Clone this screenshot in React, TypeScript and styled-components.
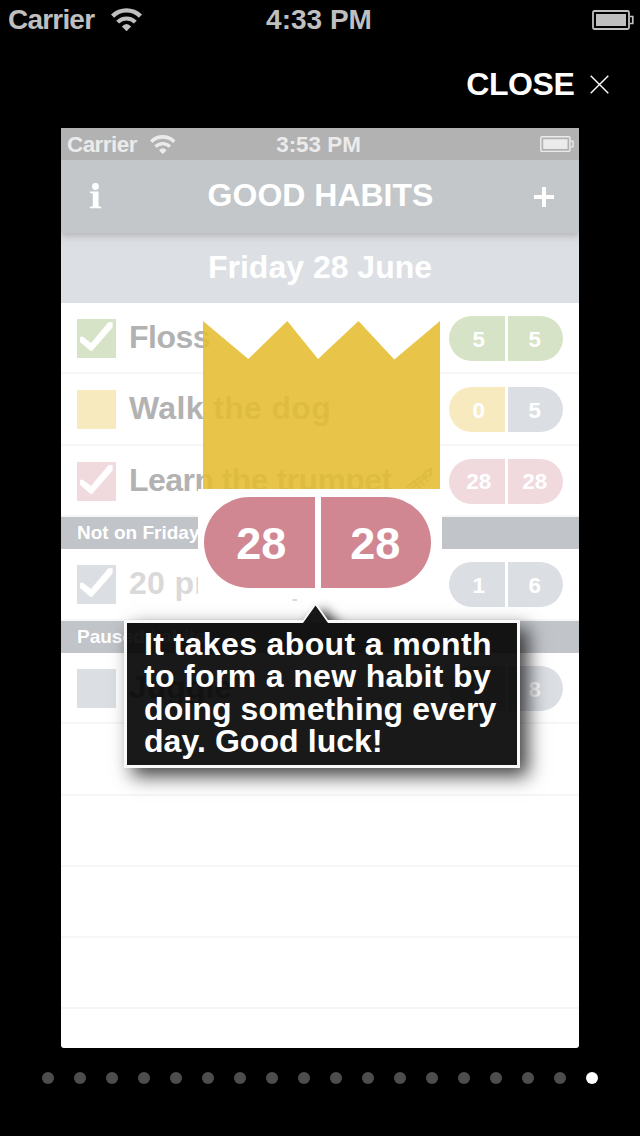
import React from "react";
import styled, { createGlobalStyle } from "styled-components";

const GlobalStyle = createGlobalStyle`
  * { box-sizing: border-box; }
  body { margin: 0; background: #000; }
`;

const palette = {
  green: "#d7e3c6",
  yellow: "#f8eabf",
  pink: "#f0dade",
  grey: "#dbdfe4",
};
type Tone = keyof typeof palette;

const Screen = styled.div`
  width: 640px;
  height: 1136px;
  background: #000;
  color: #fff;
  font-family: "Liberation Sans", Arial, sans-serif;
  font-weight: 700;
  display: flex;
  flex-direction: column;
  align-items: center;
  overflow: hidden;
`;

const StatusBar = styled.div`
  width: 640px;
  height: 40px;
  padding: 0 6px 2px 8px;
  display: grid;
  grid-template-columns: 1fr auto 1fr;
  align-items: center;
  font-size: 28px;
  line-height: 38px;
  color: #bfbfbf;
`;

const Carrier = styled.div<{ $gap: number; $spacing: number }>`
  display: flex;
  align-items: center;
  gap: ${(p) => p.$gap}px;
  letter-spacing: ${(p) => p.$spacing}px;
`;

const StatusText = styled.span<{ $drop?: number }>`
  padding-top: ${(p) => p.$drop ?? 0}px;
`;

const Clock = styled(StatusText)`
  padding-right: 4px;
`;

const Battery = styled.svg`
  justify-self: end;
  display: block;
`;

const CloseRow = styled.div`
  width: 640px;
  height: 88px;
  padding: 0 31px 0 0;
  display: flex;
  justify-content: flex-end;
  align-items: center;
  gap: 15.5px;
  font-size: 32px;
  letter-spacing: -0.4px;
`;

const Slide = styled.div`
  position: relative;
  width: 518px;
  height: 920px;
  flex: none;
  background: #fff;
  border-radius: 0 0 3px 3px;
  overflow: hidden;
`;

const MiniStatus = styled.div`
  height: 32px;
  padding: 0 5px 0 6px;
  display: grid;
  grid-template-columns: 1fr auto 1fr;
  align-items: center;
  background: #b2b2b2;
  color: #ebebeb;
  font-size: 22.4px;
  line-height: 32px;
`;

const NavBar = styled.div`
  position: relative;
  height: 73px;
  padding: 0 24px 2px 28px;
  display: grid;
  grid-template-columns: 24px 1fr 22px;
  align-items: center;
  background: #c3c7ca;
  box-shadow: 0 3px 7px rgba(140, 140, 140, 0.5);
  clip-path: inset(0 0 -14px 0);
  font-size: 32px;
  text-align: center;
`;

const NavTitle = styled.span`
  padding-right: 5px;
`;

const Plus = styled.svg`
  position: relative;
  top: 1px;
`;

const DateBar = styled.div`
  height: 70px;
  display: flex;
  align-items: center;
  justify-content: center;
  padding-bottom: 2px;
  background: #dcdfe4;
  font-size: 32px;
`;

const Row = styled.div`
  height: 71.3px;
  padding: 2px 16px 0;
  display: flex;
  align-items: center;
  border-bottom: 2px solid #f6f6f6;
`;

const Check = styled.div<{ $tone: Tone }>`
  width: 39px;
  height: 39px;
  flex: none;
  background: ${(p) => palette[p.$tone]};
`;

const HabitName = styled.div<{ $dim?: boolean; $spacing: number }>`
  flex: 1;
  display: flex;
  align-items: center;
  gap: 12px;
  padding: 0 0 3px 13px;
  font-size: 32px;
  line-height: 36px;
  letter-spacing: ${(p) => p.$spacing}px;
  white-space: nowrap;
  color: ${(p) => (p.$dim ? "#d9d9d9" : "#b2b2b2")};
`;

const Pill = styled.div<{ $large?: boolean }>`
  display: grid;
  grid-template-columns: 1fr 1fr;
  gap: ${(p) => (p.$large ? 6 : 3)}px;
  width: ${(p) => (p.$large ? 227 : 114)}px;
  height: ${(p) => (p.$large ? 91 : 45)}px;
  border-radius: 46px;
  overflow: hidden;
  font-size: ${(p) => (p.$large ? 45 : 22.4)}px;
`;

const Count = styled.div<{ $color: string }>`
  display: flex;
  align-items: center;
  justify-content: center;
  padding: 2px 0 0 4px;
  background: ${(p) => p.$color};

  & + & {
    padding: 2px 1px 0 0;
  }
`;

const Section = styled.div`
  height: 32.4px;
  padding: 0 16px;
  line-height: 32px;
  font-size: 19px;
  background: #c1c4c9;
`;

const Crown = styled.svg`
  position: absolute;
  left: 142px;
  top: 193px;
  opacity: 0.88;
`;

const BadgePatch = styled.div`
  position: absolute;
  left: 137px;
  top: 361px;
  width: 244px;
  height: 110px;
  padding: 8px 0 0 6px;
  background: #fff;
`;

const Tooltip = styled.div`
  position: absolute;
  left: 63px;
  top: 492px;
  width: 396px;
  height: 148px;
  padding: 5px 17px;
  border: 3px solid #fafafa;
  background: rgba(0, 0, 0, 0.9);
  background-clip: padding-box;
  box-shadow: 8px 8px 18px rgba(0, 0, 0, 0.75);
  font-size: 32px;
  line-height: 32.35px;
  white-space: nowrap;
`;

const TipLine = styled.div<{ $spacing: number }>`
  letter-spacing: ${(p) => p.$spacing}px;
`;

const PointerShadow = styled.svg`
  position: absolute;
  left: 220px;
  top: 450px;
`;

const Pointer = styled.svg`
  position: absolute;
  left: 174px;
  top: -21px;
`;

const Dots = styled.div`
  display: flex;
  gap: 20px;
  padding-top: 24px;
`;

const Dot = styled.span<{ $active: boolean }>`
  width: 12px;
  height: 12px;
  border-radius: 50%;
  background: ${(p) => (p.$active ? "#fff" : "#4d4d4d")};
`;

const Wifi = ({ width }: { width: number }) => (
  <svg width={width} height={(width * 24) / 32} viewBox="0 0 32 24" fill="none" stroke="currentColor">
    <path d="M1.6 8.4A20.4 20.4 0 0 1 30.4 8.4" strokeWidth="4.6" />
    <path d="M6.9 14.6A12.8 12.8 0 0 1 25.1 14.6" strokeWidth="4.2" />
    <path d="M16 24L11.2 19.2Q16 14 20.8 19.2Z" fill="currentColor" stroke="none" />
  </svg>
);

const BatteryIcon = ({ width }: { width: number }) => (
  <Battery width={width} height={(width * 20) / 42} viewBox="0 0 42 20" fill="none" stroke="currentColor">
    <rect x="1" y="1" width="36" height="18" rx="1.5" strokeWidth="1.8" />
    <rect x="4" y="4" width="30" height="12" fill="currentColor" stroke="none" />
    <path d="M38 6.5H40.8V13.5H38" strokeWidth="1.7" />
  </Battery>
);

const Tick = () => (
  <svg width="39" height="39" viewBox="0 0 39 39">
    <path fill="#fff" d="M3 18L5.5 17.5L14 24L31.4 3.3L35.6 3V8.5L15 32H13.7L3 23Z" />
  </svg>
);

const Trumpet = () => (
  <svg width="30" height="26" viewBox="0 0 32 28" fill="none" stroke="currentColor" strokeWidth="2.4">
    <path d="M2 22L24 6M5 25L26 9M11 16L18 23M15 13L22 20M20 9L26 16M23 5L29 2L28 10" />
  </svg>
);

type HabitProps = {
  name: string;
  tone: Tone;
  counts: [number, number];
  secondTone?: Tone;
  checked?: boolean;
  dim?: boolean;
  spacing?: number;
  icon?: React.ReactNode;
};

const Habit = ({ name, tone, counts, secondTone, checked, dim, spacing = 0, icon }: HabitProps) => (
  <Row>
    <Check $tone={tone}>{checked && <Tick />}</Check>
    <HabitName $dim={dim} $spacing={spacing}>
      {name}
      {icon}
    </HabitName>
    <Pill>
      <Count $color={palette[tone]}>{counts[0]}</Count>
      <Count $color={palette[secondTone ?? tone]}>{counts[1]}</Count>
    </Pill>
  </Row>
);

export default function App() {
  return (
    <Screen>
      <GlobalStyle />
      <StatusBar>
        <Carrier $gap={17} $spacing={-0.8}>
          <StatusText $drop={1}>Carrier</StatusText>
          <Wifi width={31} />
        </Carrier>
        <Clock $drop={1}>4:33 PM</Clock>
        <BatteryIcon width={42} />
      </StatusBar>
      <CloseRow>
        CLOSE
        <svg width="19" height="19" viewBox="0 0 19 19" stroke="#fff" strokeWidth="1.4">
          <path d="M.7 .7L18.3 18.3M18.3 .7L.7 18.3" />
        </svg>
      </CloseRow>
      <Slide>
        <MiniStatus>
          <Carrier $gap={13} $spacing={-0.5}>
            <StatusText $drop={1}>Carrier</StatusText>
            <Wifi width={25.5} />
          </Carrier>
          <Clock>3:53 PM</Clock>
          <BatteryIcon width={34} />
        </MiniStatus>
        <NavBar>
          <svg width="13" height="26" viewBox="0 0 13 26" fill="#fff">
            <circle cx="6.5" cy="3.5" r="3.4" />
            <path d="M.8 8.5H9.5V23.3L12.3 24V25.3H.8V24L3.8 23.3V10.7L.8 9.8Z" />
          </svg>
          <NavTitle>GOOD HABITS</NavTitle>
          <Plus width="22" height="22" viewBox="0 0 22 22" stroke="#fff" strokeWidth="4">
            <path d="M1 11H21M11 1V21" />
          </Plus>
        </NavBar>
        <DateBar>Friday 28 June</DateBar>
        <Habit name="Floss" tone="green" counts={[5, 5]} checked spacing={-0.5} />
        <Habit name="Walk the dog" tone="yellow" secondTone="grey" counts={[0, 5]} spacing={0.35} />
        <Habit name="Learn the trumpet" tone="pink" counts={[28, 28]} checked spacing={-0.55} icon={<Trumpet />} />
        <Section>Not on Friday</Section>
        <Habit name="20 press ups" tone="grey" counts={[1, 6]} checked dim spacing={0.3} />
        <Section>Paused habits</Section>
        <Habit name="Juggle" tone="grey" counts={[0, 8]} />
        {[0, 1, 2, 3].map((i) => (
          <Row key={i} />
        ))}
        <Crown width="237" height="168" viewBox="0 0 237 168">
          <path fill="#e5be31" d="M0 0L45.3 38L84.3 0L115 38L155.5 0L191.3 38.5L237 0V168H0Z" />
        </Crown>
        <BadgePatch>
          <Pill $large>
            <Count $color="#d18792">28</Count>
            <Count $color="#d18792">28</Count>
          </Pill>
        </BadgePatch>
        <PointerShadow width="90" height="42" viewBox="0 0 90 42">
          <path d="M20 54L42 30L64 54Z" fill="#000" opacity=".75" style={{ filter: "blur(6px)" }} />
        </PointerShadow>
        <Tooltip>
          <TipLine $spacing={0.38}>It takes about a month</TipLine>
          <TipLine $spacing={0.34}>to form a new habit by</TipLine>
          <TipLine $spacing={0.1}>doing something every</TipLine>
          <TipLine $spacing={0.07}>day. Good luck!</TipLine>
          <Pointer width="29" height="21" viewBox="0 0 29 21">
            <path d="M0 21L14.5 0L29 21Z" fill="#fafafa" />
            <path d="M2 21L14.5 3.5L27 21Z" fill="#161616" />
          </Pointer>
        </Tooltip>
      </Slide>
      <Dots>
        {Array.from({ length: 18 }, (_, i) => (
          <Dot key={i} $active={i === 17} />
        ))}
      </Dots>
    </Screen>
  );
}
